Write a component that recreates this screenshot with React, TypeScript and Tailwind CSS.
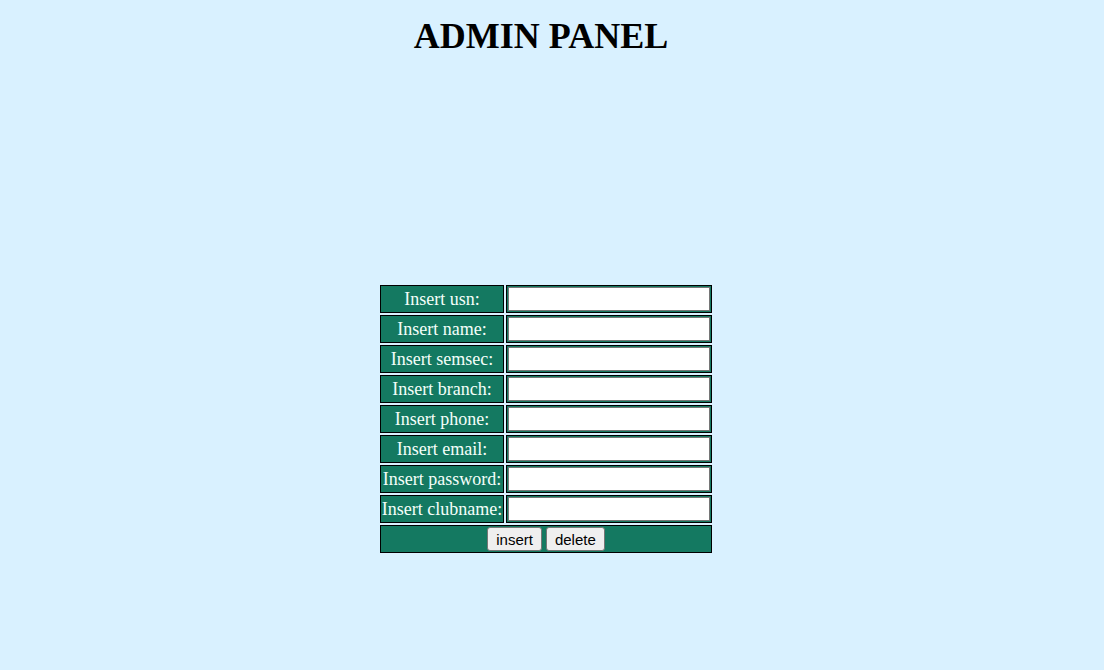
const fields = ['usn', 'name', 'semsec', 'branch', 'phone', 'email', 'password', 'clubname'];

const cell = 'border border-black bg-[#147961] p-px text-center';
const button =
  'h-6 rounded-[3px] border border-[#767676] bg-[#efefef] px-2 pt-0.5 text-[15px] leading-5 text-black [font-family:"Liberation_Sans",sans-serif]';

export default function App() {
  return (
    <main className='min-h-screen bg-[#d9f1ff] pr-3 [font-family:"Liberation_Serif",serif]'>
      <h1 className="pt-4 pr-2.5 text-center text-4xl font-bold text-black">ADMIN PANEL</h1>
      <form className="flex justify-center pt-[227px]" onSubmit={(e) => e.preventDefault()}>
        <table className="border-separate border-spacing-0.5 text-lg leading-6 text-[#f5fffa]">
          <tbody>
            {fields.map((field) => (
              <tr key={field}>
                <td className={cell}>
                  <label htmlFor={field} className="block whitespace-nowrap">
                    Insert {field}:
                  </label>
                </td>
                <td className={cell}>
                  <input
                    id={field}
                    name={field}
                    type={field === 'password' ? 'password' : 'text'}
                    className="block h-6 w-[202px] border border-[#767676] bg-white px-1 text-[15px] text-black"
                  />
                </td>
              </tr>
            ))}
            <tr>
              <td colSpan={2} className={cell}>
                <div className="flex justify-center gap-1">
                  <button type="submit" className={button}>insert</button>
                  <button type="button" className={button}>delete</button>
                </div>
              </td>
            </tr>
          </tbody>
        </table>
      </form>
    </main>
  );
}
